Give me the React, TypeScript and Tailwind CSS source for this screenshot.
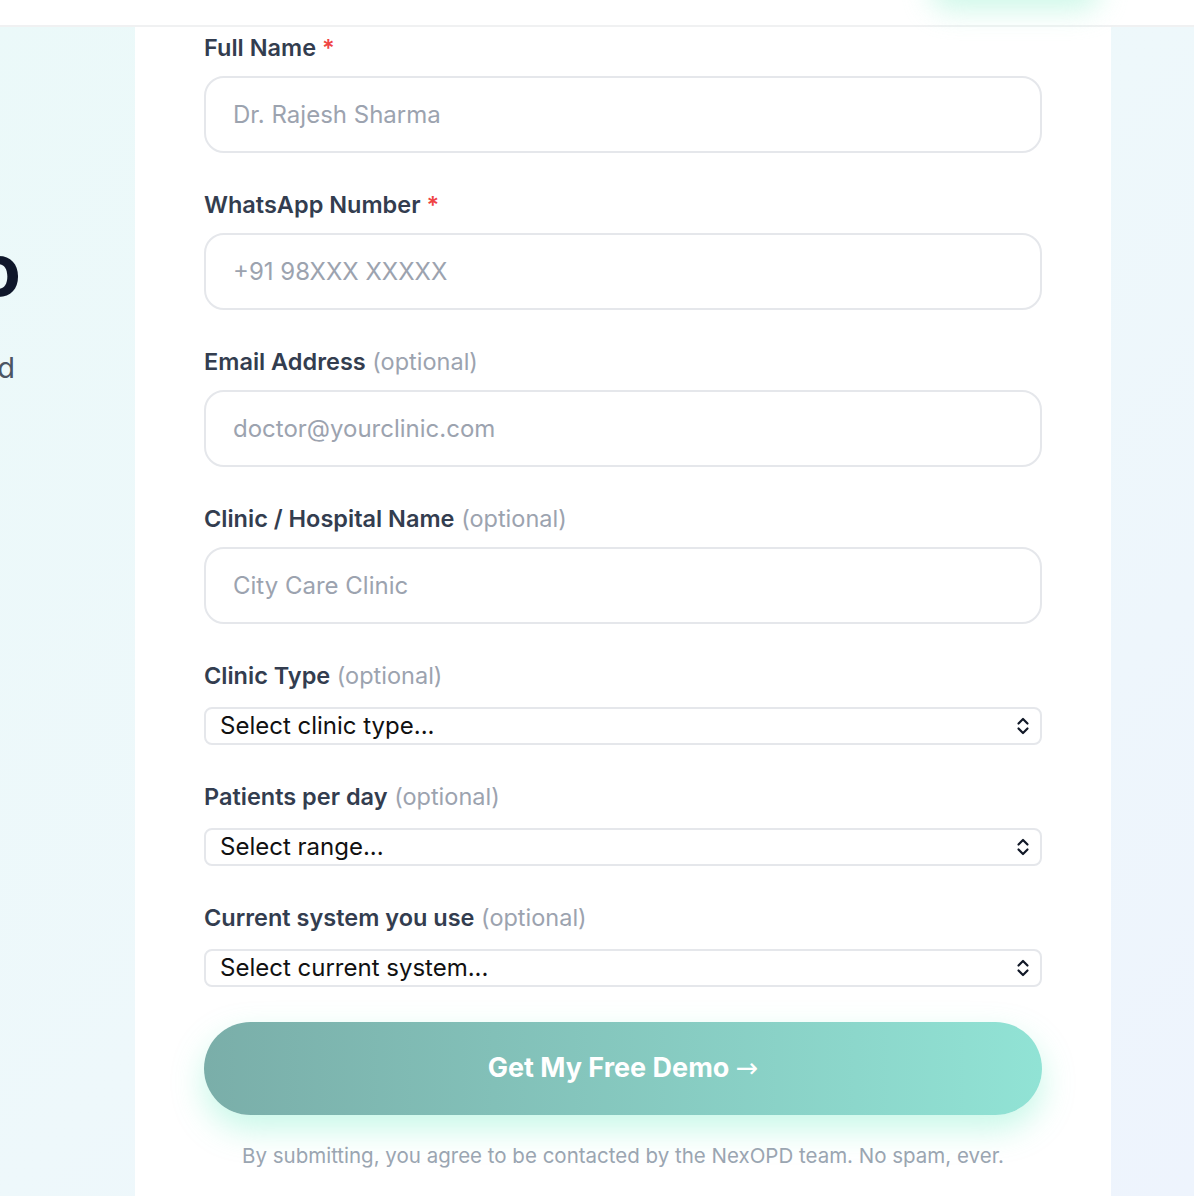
import type { ReactNode } from 'react';

const font = { fontFamily: 'Inter, "Noto Sans", sans-serif' };

function Label({ text, required, optional }: { text: string; required?: boolean; optional?: boolean }) {
  return (
    <div className="text-[23.5px] leading-[28px] font-semibold text-[#333d4f]">
      {text}
      {required && <span className="text-[#ef4444]"> *</span>}
      {optional && <span className="font-normal text-[#9ca3af]"> (optional)</span>}
    </div>
  );
}

function TextField({ label, placeholder, required }: { label: string; placeholder: string; required?: boolean }) {
  return (
    <div className="flex flex-col gap-[14px]">
      <Label text={label} required={required} optional={!required} />
      <div className="h-[77px] rounded-[20px] border-2 border-[#e5e7eb] bg-white flex items-center px-[27px] text-[24px] text-[#9ca3af]">
        {placeholder}
      </div>
    </div>
  );
}

function UpDown() {
  return (
    <svg width="14" height="20" viewBox="0 0 14 20" fill="none" stroke="#111827" strokeWidth="2.2" strokeLinecap="round" strokeLinejoin="round">
      <path d="M2.5 7.5 7 3l4.5 4.5" />
      <path d="M2.5 12.5 7 17l4.5-4.5" />
    </svg>
  );
}

function SelectField({ label, value }: { label: string; value: string }) {
  return (
    <div className="flex flex-col gap-[17px]">
      <Label text={label} optional />
      <div className="h-[38px] rounded-[8px] border-2 border-[#e5e7eb] bg-white flex items-center justify-between pl-[14px] pr-[10px] text-[24px] text-[#111111]">
        <span>{value}</span>
        <UpDown />
      </div>
    </div>
  );
}

function Side({ children }: { children?: ReactNode }) {
  return <div className="w-[135px] shrink-0 overflow-hidden">{children}</div>;
}

export default function App() {
  return (
    <div style={font} className="min-h-screen w-[1194px] h-[1196px] overflow-hidden bg-gradient-to-br from-[#ebf9f9] via-[#eef8fb] to-[#eef4fd]">
      <header className="relative h-[27px] bg-white border-b-2 border-[#f0f1f2]">
        <div className="absolute left-[930px] -top-[30px] w-[170px] h-[40px] rounded-full bg-[#b9f5df] blur-[14px] opacity-70" />
      </header>
      <div className="flex">
        <Side>
          <div className="w-[21px] flex flex-col items-end pt-[200px]">
            <div className="whitespace-nowrap text-[72px] leading-[86px] font-bold text-[#0f172a]">Book Your Free Demo</div>
            <div className="whitespace-nowrap mt-[35px] mr-[6px] text-[29px] leading-[40px] text-[#4b5563]">Setup in minutes and</div>
          </div>
        </Side>
        <main className="w-[976px] shrink-0 bg-white px-[69px] pt-[7px] pb-[40px]">
          <div className="flex flex-col gap-[38px]">
            <TextField label="Full Name" placeholder="Dr. Rajesh Sharma" required />
            <TextField label="WhatsApp Number" placeholder="+91 98XXX XXXXX" required />
            <TextField label="Email Address" placeholder="doctor@yourclinic.com" />
            <TextField label="Clinic / Hospital Name" placeholder="City Care Clinic" />
          </div>
          <div className="mt-[38px] flex flex-col gap-[38px]">
            <SelectField label="Clinic Type" value="Select clinic type..." />
            <SelectField label="Patients per day" value="Select range..." />
            <SelectField label="Current system you use" value="Select current system..." />
          </div>
          <button className="mt-[35px] w-full h-[93px] rounded-full bg-gradient-to-r from-[#7aaea9] to-[#91e3d5] text-white text-[27px] font-bold shadow-[0_14px_32px_rgba(94,234,190,0.35)]">
            Get My Free Demo{' '}
            <span className="font-normal" style={{ fontFamily: '"DejaVu Sans", sans-serif' }}>→</span>
          </button>
          <p className="mt-[26px] text-center text-[20.5px] text-[#9aa5b1]">
            By submitting, you agree to be contacted by the NexOPD team. No spam, ever.
          </p>
        </main>
        <div className="flex-1" />
      </div>
    </div>
  );
}
